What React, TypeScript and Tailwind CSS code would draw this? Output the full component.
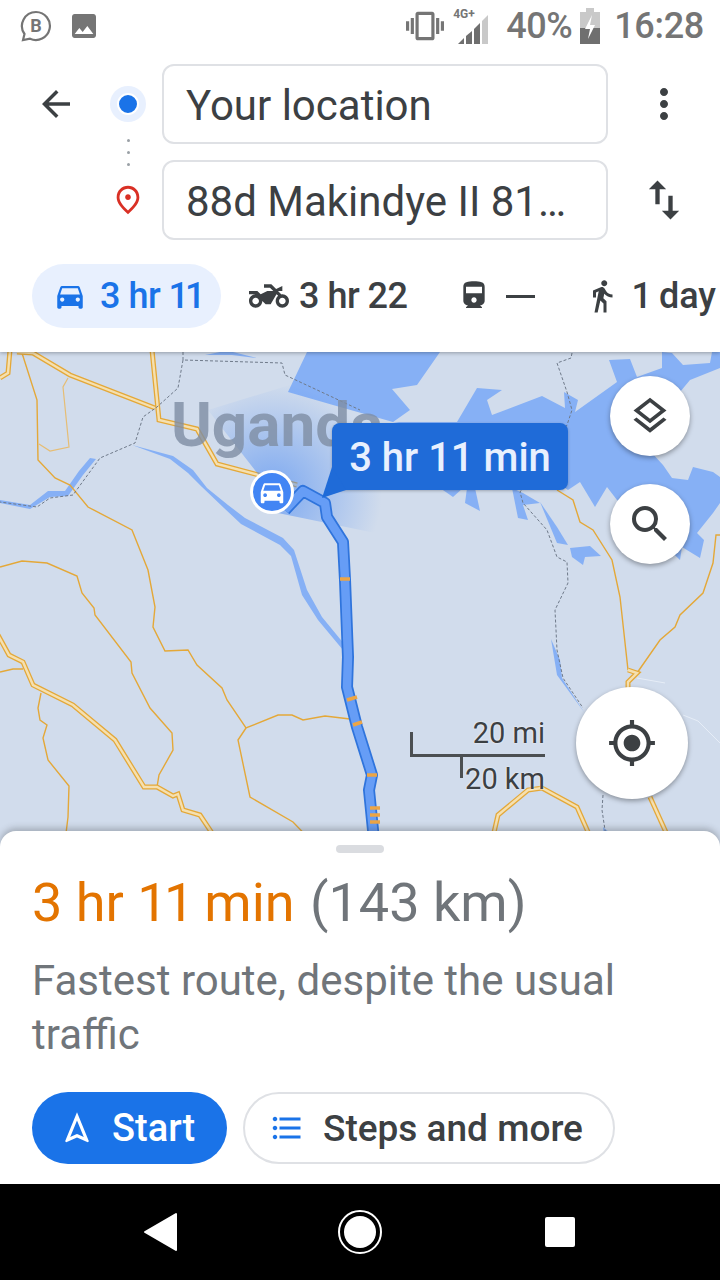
import {
  MdArrowBack,
  MdMoreVert,
  MdSwapVert,
  MdDirectionsCar,
  MdTwoWheeler,
  MdDirectionsRailway,
  MdDirectionsWalk,
  MdOutlineLayers,
  MdSearch,
  MdGpsFixed,
  MdFormatListBulleted,
  MdOutlineNavigation,
  MdOutlinePlace,
  MdPhoto,
  MdVibration,
} from "react-icons/md";

const doubleRoads = [
  "17,352 33,353 70,375 155,408",
  "152,350 159,420 197,429 217,464 297,485",
  "10,350 8,373 0,378",
  "-2,635 9,655 23,662 33,685 73,705 115,740 144,787 157,787 173,796 178,794 183,810 200,815 212,833 222,850",
  "628,670 637,673 628,682 628,700",
  "490,850 498,815 528,790 542,788 577,807 596,850",
  "650,797 674,850",
];

const thinRoads = [
  "22,353 37,400 38,460 55,478 70,485 88,507 132,530 148,570 155,607 153,627 165,651 188,650 197,665 222,688 227,700 246,728 278,715 292,715 303,720 325,716 350,719",
  "0,567 22,561 47,563 77,576 82,593 94,608 95,615 131,662 132,673 150,708 172,733 173,750 159,775 157,787",
  "0,672 13,669 23,669",
  "41,693 38,708 40,720 47,725 43,738 48,760 69,786 68,817 64,850",
  "246,728 238,740 250,797 293,822 320,850",
  "557,490 573,500 580,522 593,530 612,560 620,597 628,670",
  "720,535 716,535 713,563 703,593 680,615 675,627 660,640 637,673",
];

const faintRoads = ["68,378 63,387 69,447 50,451 39,444"];

const borders = [
  "183,352 183,360 282,363 285,375 360,410",
  "183,360 178,388 157,407 143,417 135,443 100,458 73,495 50,498 37,507 0,502",
  "572,353 571,358 557,363 567,392 572,410 567,425 520,492 523,503 547,530 557,557 567,562 568,583 555,610 557,650 563,678 583,708",
  "603,795 602,810 608,850",
];

const water = [
  "307,352 288,392 333,405 393,422 500,440 568,490 580,482 595,507 607,487 617,500 680,560 682,547 700,558 704,540 697,533 713,513 720,503 720,477 713,472 693,467 688,480 672,478 663,465 640,440 690,380 720,368 720,352 712,352 710,363 683,365 672,353 662,352 662,368 637,377 630,359 609,360 617,382 575,412 578,400 564,392 565,408 542,396 492,415 487,400 502,390 477,388 457,422 393,422 410,410 392,389 417,385 440,352",
  "205,355 220,352 233,352 257,358 232,355",
  "467,488 465,503 480,511 475,488",
  "440,488 453,497 463,488",
  "512,488 518,518 528,520 523,505 540,503 523,493",
  "540,502 557,527 568,545 557,543",
  "570,548 590,546 601,556 585,557 583,565 572,557",
  "551,639 560,660 562,678 584,712 557,675",
  "132,445 173,456 193,470 207,488 228,505 245,518 283,538 294,550 307,590 322,617 345,645 343,650 318,620 302,595 291,556 280,545 241,524 224,508 202,487 188,473 170,459",
  "0,500 30,505 48,491 65,491 79,471 90,458 96,459 83,475 68,496 50,497 30,509 0,503",
  "603,827 610,833 605,845",
];

const traffic = [
  [340, 579, 350, 579],
  [347, 700, 357, 697],
  [353, 725, 362, 722],
  [367, 775, 377, 775],
  [370, 808, 380, 808],
  [370, 815, 380, 815],
  [370, 822, 380, 822],
];

const routePoints =
  "285,510 303,491 325,503 327,517 343,542 345,580 348,657 347,687 357,727 372,775 369,790 375,850";

const signalBars = [
  "460,38 466,38 466,32",
  "468,38 474,38 474,25 468,30",
  "476,38 482,38 482,17 476,23",
];

function MapLayer() {
  return (
    <svg className="absolute inset-0" width="720" height="495" viewBox="0 352 720 495">
      <defs>
        <radialGradient id="cone" gradientUnits="userSpaceOnUse" cx="272" cy="492" r="110">
          <stop offset="0%" stopColor="#4285f4" stopOpacity="0.6" />
          <stop offset="100%" stopColor="#4285f4" stopOpacity="0" />
        </radialGradient>
      </defs>
      {water.map((p) => (
        <polygon key={p} points={p} fill="#86b0f5" />
      ))}
      {faintRoads.map((p) => (
        <polyline key={p} points={p} fill="none" stroke="#e6bd74" strokeWidth="1.2" />
      ))}
      {thinRoads.map((p) => (
        <polyline key={p} points={p} fill="none" stroke="#e4a838" strokeWidth="1.4" />
      ))}
      {doubleRoads.map((p) => (
        <g key={p}>
          <polyline points={p} fill="none" stroke="#e4a838" strokeWidth="5" />
          <polyline points={p} fill="none" stroke="#f5e0b0" strokeWidth="2.4" />
        </g>
      ))}
      {borders.map((p) => (
        <polyline key={p} points={p} fill="none" stroke="#6f7a8a" strokeWidth="1" strokeDasharray="3 2" />
      ))}
      <polyline points="637,678 665,683" fill="none" stroke="#e6edf7" strokeWidth="1" />
      <polyline points="683,715 698,721 720,743" fill="none" stroke="#e6edf7" strokeWidth="1" />
      <polygon points="272,492 208,410 290,385 385,420 385,535 273,512" fill="url(#cone)" />
      <polyline points={routePoints} fill="none" stroke="#2f74dc" strokeWidth="12" strokeLinejoin="round" />
      <polyline points={routePoints} fill="none" stroke="#669df6" strokeWidth="8.5" strokeLinejoin="round" />
      {traffic.map(([x1, y1, x2, y2]) => (
        <line key={`${x1}-${y1}`} x1={x1} y1={y1} x2={x2} y2={y2} stroke="#eda545" strokeWidth="3.5" />
      ))}
    </svg>
  );
}

function RoundButton({ size, children }: { size: string; children: React.ReactNode }) {
  return (
    <div className={`${size} flex items-center justify-center rounded-full bg-white text-[#3c4043] shadow-[0_2px_5px_rgba(0,0,0,0.35)]`}>
      {children}
    </div>
  );
}

export default function App() {
  return (
    <div className="flex h-[1280px] w-[720px] flex-col overflow-hidden bg-white font-['Roboto',sans-serif] text-[#3c4043]">
      {/* status bar */}
      <div className="relative z-20 flex h-[52px] items-center bg-white pl-5 pr-4 text-[#757575]">
        <svg width="32" height="32" viewBox="0 0 32 32" fill="none" stroke="#757575" strokeWidth="2.2">
          <path d="M16 2a14 14 0 1 1-6 26.7L3 30l1.5-6A14 14 0 0 1 16 2Z" />
          <text x="16" y="22" fontSize="18" fontWeight="700" textAnchor="middle" fill="#757575" stroke="none">
            B
          </text>
        </svg>
        <MdPhoto size={32} className="ml-4" />
        <div className="ml-auto flex items-center">
          <MdVibration size={38} />
          <div className="relative ml-[10px] h-[40px] w-[38px]">
            <svg width="38" height="40" viewBox="456 0 38 40" className="absolute inset-0">
              {signalBars.map((p) => (
                <polygon key={p} points={p} fill="#6f6f6f" />
              ))}
              <polygon points="484,38 490,38 490,9 484,15" fill="#c9c9c9" />
            </svg>
            <span className="absolute -left-[1px] top-[2px] text-[12px] font-bold leading-none text-[#757575]">4G+</span>
          </div>
          <span className="ml-[14px] text-[36px] font-medium leading-none tracking-[-0.5px]">40%</span>
          <svg width="20" height="40" viewBox="0 0 20 40" className="ml-2">
            <rect x="6" y="2" width="8" height="5" fill="#c9c9c9" />
            <rect x="0" y="6" width="20" height="16" fill="#c9c9c9" />
            <rect x="0" y="22" width="20" height="16" fill="#6f6f6f" />
            <polygon points="12,9 5,23 10,23 8,33 15,19 10,19" fill="#fff" />
          </svg>
          <span className="ml-[14px] text-[36px] font-medium leading-none tracking-[-0.3px]">16:28</span>
        </div>
      </div>

      {/* directions header */}
      <div className="relative z-10 flex flex-col bg-white shadow-[0_1px_4px_rgba(0,0,0,0.3)]">
        <div className="mt-3 flex h-[176px] pl-[36px]">
          <div className="flex h-[80px] w-[58px] items-center">
            <MdArrowBack size={42} className="-ml-[1px]" />
          </div>
          <div className="flex w-[68px] flex-col items-center">
            <div className="mt-[22px] flex h-[36px] w-[36px] shrink-0 items-center justify-center rounded-full bg-[#e8f0fe]">
              <div className="h-[22px] w-[22px] rounded-full border-[2px] border-white bg-[#1a73e8]" />
            </div>
            <div className="mt-[17px] flex flex-col gap-[9px]">
              <div className="h-[3px] w-[3px] rounded-full bg-[#9aa0a6]" />
              <div className="h-[3px] w-[3px] rounded-full bg-[#9aa0a6]" />
              <div className="h-[3px] w-[3px] rounded-full bg-[#9aa0a6]" />
            </div>
            <MdOutlinePlace size={34} className="mt-[17px] text-[#d93025]" />
          </div>
          <div className="flex w-[446px] flex-col gap-4">
            <div className="flex h-[80px] items-center rounded-xl border-2 border-[#dfe1e5] pl-[22px] pt-[3px] text-[42px] leading-none">
              Your location
            </div>
            <div className="flex h-[80px] items-center rounded-xl border-2 border-[#dfe1e5] pl-[22px] pt-[3px] text-[42px] leading-none">
              88d Makindye II 81…
            </div>
          </div>
          <div className="flex w-[112px] flex-col items-center">
            <div className="flex h-[80px] items-center">
              <MdMoreVert size={48} />
            </div>
            <div className="mt-4 flex h-[80px] items-center">
              <MdSwapVert size={52} />
            </div>
          </div>
        </div>

        <div className="mb-6 mt-6 flex h-[64px] items-center overflow-hidden pl-8 text-[36px] font-medium leading-none">
          <div className="flex h-[64px] w-[189px] shrink-0 items-center rounded-full bg-[#e8f0fe] pl-[21px] text-[#1a73e8]">
            <MdDirectionsCar size={34} />
            <span className="ml-[13px] tracking-[-0.5px]">
              3 hr <span className="tracking-[-4px]">11</span>
            </span>
          </div>
          <MdTwoWheeler size={40} className="ml-[28px] shrink-0" />
          <span className="ml-[10px] shrink-0 tracking-[-0.5px]">3 hr 22</span>
          <MdDirectionsRailway size={32} className="ml-[50px] shrink-0" />
          <div className="ml-[16px] h-[3px] w-[29px] shrink-0 bg-[#3c4043]" />
          <MdDirectionsWalk size={36} className="ml-[49px] shrink-0" />
          <span className="ml-[12px] shrink-0">
            <span className="tracking-[-2px]">1</span> day
          </span>
        </div>
      </div>

      {/* map */}
      <div className="relative flex-1 bg-[#d1dcec]">
        <MapLayer />
        <div className="absolute left-[171px] top-[38px] text-[62px] font-bold leading-[70px] text-[#7f8ea4] opacity-80 blur-[0.6px]">
          Uganda
        </div>
        <div className="absolute left-[250px] top-[118px] flex h-[44px] w-[44px] items-center justify-center rounded-full border-[3px] border-white bg-[#4285f4] text-white">
          <MdDirectionsCar size={30} />
        </div>
        <div className="absolute left-[332px] top-[71px] flex h-[67px] w-[236px] items-center justify-center rounded-lg bg-[#1f6bd8] pt-[2px] text-[40px] font-medium leading-none text-[#e8f0fe] shadow-[0_1px_3px_rgba(0,0,0,0.25)]">
          3 hr 11 min
        </div>
        <svg className="absolute left-[320px] top-[115px]" width="30" height="35" viewBox="0 0 30 35">
          <polygon points="12,0 2,31 26,23" fill="#1f6bd8" />
        </svg>
        <div className="absolute left-[610px] top-[24px] flex flex-col gap-7">
          <RoundButton size="h-[80px] w-[80px]">
            <MdOutlineLayers size={44} />
          </RoundButton>
          <RoundButton size="h-[80px] w-[80px]">
            <MdSearch size={48} />
          </RoundButton>
        </div>
        <div className="absolute left-[576px] top-[335px]">
          <RoundButton size="h-[112px] w-[112px]">
            <MdGpsFixed size={50} />
          </RoundButton>
        </div>
        <div className="absolute left-[410px] top-[367px] h-[60px] w-[135px] text-[29px] leading-none [text-shadow:0_0_2px_#fff]">
          <div className="absolute right-0 top-0">20 mi</div>
          <div className="absolute left-0 top-[13px] h-[24px] w-[3px] bg-[#4b4f52]" />
          <div className="absolute left-0 top-[35px] h-[3px] w-[135px] bg-[#4b4f52]" />
          <div className="absolute left-[50px] top-[35px] h-[24px] w-[3px] bg-[#4b4f52]" />
          <div className="absolute right-0 top-[46px]">20 km</div>
        </div>
      </div>

      {/* bottom sheet */}
      <div className="relative z-10 -mt-4 flex h-[353px] flex-col rounded-t-2xl bg-white px-8 shadow-[0_-3px_6px_rgba(60,64,67,0.3)]">
        <div className="mx-auto mt-[14px] h-2 w-12 rounded-full bg-[#dadce0]" />
        <div className="mt-[18px] text-[54px] leading-[64px] text-[#70757a]">
          <span className="mr-[2px] text-[#e37400]">
            3 hr <span className="tracking-[-3.5px]">11</span> min
          </span>{" "}
          (143 km)
        </div>
        <div className="mt-[19px] w-[640px] text-[42px] leading-[54px] text-[#70757a]">
          Fastest route, despite the usual traffic
        </div>
        <div className="mt-[30px] flex gap-4 font-medium leading-none">
          <div className="flex h-[72px] w-[195px] items-center rounded-full bg-[#1a73e8] pl-[26px] text-[38px] text-white">
            <MdOutlineNavigation size={38} />
            <span className="ml-[16px]">Start</span>
          </div>
          <div className="flex h-[72px] w-[372px] items-center rounded-full border-2 border-[#dfe1e5] pl-[24px] text-[37px]">
            <MdFormatListBulleted size={36} className="text-[#1a73e8]" />
            <span className="ml-[18px]">Steps and more</span>
          </div>
        </div>
      </div>

      {/* nav bar */}
      <div className="relative z-10 flex h-[96px] items-center bg-black">
        <svg width="720" height="60" viewBox="0 0 720 60">
          <polygon points="176,12 176,48 145,30" fill="#fff" stroke="#fff" strokeWidth="2" strokeLinejoin="round" />
          <circle cx="360" cy="30" r="21" fill="#000" stroke="#fff" strokeWidth="2" />
          <circle cx="360" cy="30" r="16" fill="#fff" />
          <rect x="545" y="15" width="30" height="30" rx="2" fill="#fff" />
        </svg>
      </div>
    </div>
  );
}
